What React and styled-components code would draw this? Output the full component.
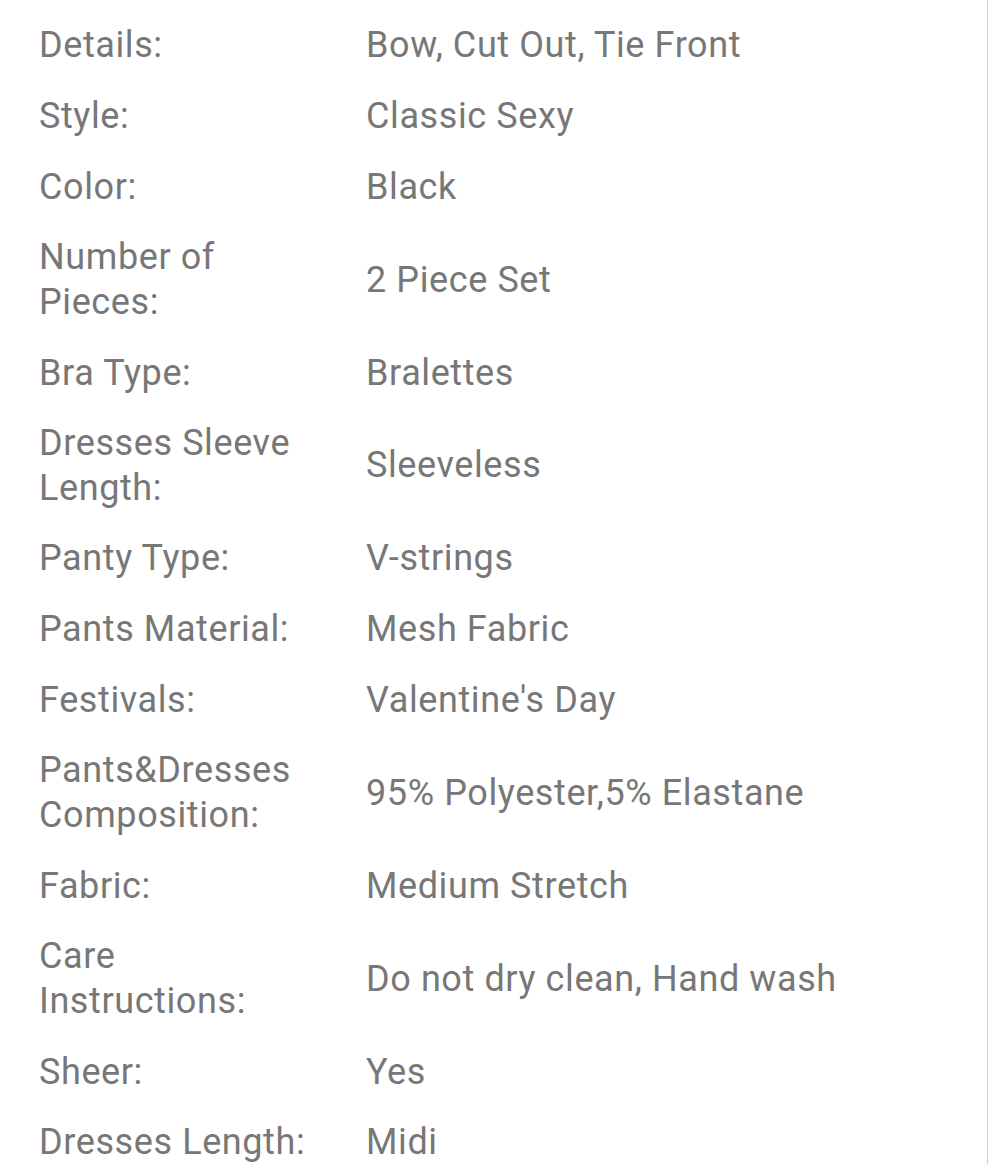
import React from "react";
import styled, { createGlobalStyle } from "styled-components";

const GlobalStyle = createGlobalStyle`
  html, body {
    margin: 0;
    padding: 0;
    background: #ffffff;
  }
  body {
    font-family: Roboto, "Liberation Sans", sans-serif;
  }
`;

const Page = styled.div`
  box-sizing: border-box;
  width: 988px;
  min-height: 1164px;
  border-right: 1px solid #cfcfcf;
  padding: 10.5px 0 0 39px;
  background: #fff;
`;

const SpecTable = styled.div`
  display: grid;
  grid-template-columns: 285px 1fr;
  column-gap: 42px;
`;

const Label = styled.div`
  padding: 12.9px 0;
  font-size: 36px;
  line-height: 44.8px;
  letter-spacing: 0.6px;
  color: #777777;
  display: flex;
  align-items: center;
`;

const Value = styled(Label)``;

const specs = [
  { label: "Details:", value: "Bow, Cut Out, Tie Front" },
  { label: "Style:", value: "Classic Sexy" },
  { label: "Color:", value: "Black" },
  { label: "Number of Pieces:", value: "2 Piece Set" },
  { label: "Bra Type:", value: "Bralettes" },
  { label: "Dresses Sleeve Length:", value: "Sleeveless" },
  { label: "Panty Type:", value: "V-strings" },
  { label: "Pants Material:", value: "Mesh Fabric" },
  { label: "Festivals:", value: "Valentine's Day" },
  { label: "Pants&Dresses Composition:", value: "95% Polyester,5% Elastane" },
  { label: "Fabric:", value: "Medium Stretch" },
  { label: "Care Instructions:", value: "Do not dry clean, Hand wash" },
  { label: "Sheer:", value: "Yes" },
  { label: "Dresses Length:", value: "Midi" },
];

const App = () => {
  return (
    <>
      <GlobalStyle />
      <Page>
        <SpecTable>
          {specs.map((spec) => (
            <React.Fragment key={spec.label}>
              <Label>{spec.label}</Label>
              <Value>{spec.value}</Value>
            </React.Fragment>
          ))}
        </SpecTable>
      </Page>
    </>
  );
};

export default App;
